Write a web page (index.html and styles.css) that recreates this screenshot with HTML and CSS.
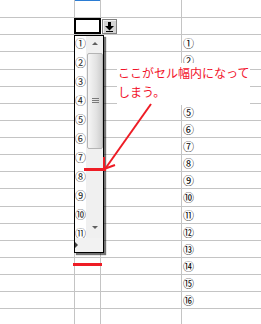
FILE: index.html
```html
<!doctype html>
<html>
<head>
  <meta charset="utf-8">
  <title>入力規則リスト</title>
  <link rel="stylesheet" href="styles.css">
</head>
<body>

  <div class="sheet">
    <div class="row tall"><div class="cell"></div><div class="cell head-mark"></div><div class="cell"></div><div class="cell"></div></div>
    <div class="row"><div class="cell"></div><div class="cell"></div><div class="cell"></div><div class="cell"></div></div>
    <div class="row"><div class="cell"></div><div class="cell"></div><div class="cell"></div><div class="cell">①</div></div>
    <div class="row tall"><div class="cell"></div><div class="cell"></div><div class="cell"></div><div class="cell">②</div></div>
    <div class="row"><div class="cell"></div><div class="cell"></div><div class="cell"></div><div class="cell"></div></div>
    <div class="row"><div class="cell"></div><div class="cell"></div><div class="cell"></div><div class="cell"></div></div>
    <div class="row"><div class="cell"></div><div class="cell"></div><div class="cell"></div><div class="cell">⑤</div></div>
    <div class="row"><div class="cell"></div><div class="cell"></div><div class="cell"></div><div class="cell">⑥</div></div>
    <div class="row"><div class="cell"></div><div class="cell"></div><div class="cell"></div><div class="cell">⑦</div></div>
    <div class="row"><div class="cell"></div><div class="cell"></div><div class="cell"></div><div class="cell">⑧</div></div>
    <div class="row"><div class="cell"></div><div class="cell"></div><div class="cell"></div><div class="cell">⑨</div></div>
    <div class="row tall"><div class="cell"></div><div class="cell"></div><div class="cell"></div><div class="cell">⑩</div></div>
    <div class="row"><div class="cell"></div><div class="cell"></div><div class="cell"></div><div class="cell">⑪</div></div>
    <div class="row"><div class="cell"></div><div class="cell"></div><div class="cell"></div><div class="cell">⑫</div></div>
    <div class="row"><div class="cell"></div><div class="cell"></div><div class="cell"></div><div class="cell">⑬</div></div>
    <div class="row"><div class="cell"></div><div class="cell"></div><div class="cell"></div><div class="cell">⑭</div></div>
    <div class="row"><div class="cell"></div><div class="cell"></div><div class="cell"></div><div class="cell">⑮</div></div>
    <div class="row"><div class="cell"></div><div class="cell"></div><div class="cell"></div><div class="cell">⑯</div></div>
    <div class="row last"><div class="cell"></div><div class="cell"></div><div class="cell"></div><div class="cell"></div></div>
  </div>

  <div class="selection"></div>

  <div class="drop-btn">
    <svg width="13" height="13" viewBox="0 0 13 13">
      <rect x="5" y="2" width="3" height="4" fill="#000"/>
      <polygon points="2,6 11,6 6.5,10.5" fill="#000"/>
      <rect x="3" y="11" width="7" height="1" fill="#000"/>
    </svg>
  </div>

  <div class="list">
    <div class="list-body">
      <ul class="items">
        <li>①</li>
        <li>②</li>
        <li>③</li>
        <li>④</li>
        <li>⑤</li>
        <li>⑥</li>
        <li>⑦</li>
        <li>⑧</li>
        <li>⑨</li>
        <li>⑩</li>
        <li>⑪</li>
      </ul>
      <div class="scrollbar">
        <div class="sb-btn up"></div>
        <div class="sb-track">
          <div class="sb-thumb"><span class="grip"></span></div>
        </div>
        <div class="sb-btn down"></div>
      </div>
    </div>
    <div class="list-foot"><span class="foot-arrow"></span></div>
  </div>

  <div class="note">ここがセル幅内になって<br>しまう。</div>

  <svg class="marks" width="261" height="324" viewBox="0 0 261 324">
    <line x1="151" y1="104" x2="105" y2="169" stroke="#ee1c25" stroke-width="2"/>
    <polyline points="104,157 104,169 115,165" fill="none" stroke="#ee1c25" stroke-width="2"/>
    <rect x="84" y="168" width="22" height="3" fill="#ee1c25"/>
    <rect x="73" y="263" width="29" height="3" fill="#ee1c25"/>
  </svg>

</body>
</html>
```

FILE: styles.css
```css
html, body {
  margin: 0;
  height: 100%;
}

body {
  position: relative;
  width: 261px;
  height: 324px;
  overflow: hidden;
  background: #fff;
  font-family: "Noto Sans CJK JP", sans-serif;
}

.sheet {
  width: 261px;
}

.row {
  display: grid;
  grid-template-columns: 75px 26px 81px 79px;
  height: 17px;
}

.row.tall {
  height: 18px;
}

.row.last {
  height: 16px;
}

.cell {
  border-right: 1px solid #c4c4c4;
  border-bottom: 1px solid #c4c4c4;
  padding-left: 1px;
  font-size: 11px;
  line-height: 16px;
  color: #000;
  overflow: hidden;
  white-space: nowrap;
}

.cell:last-child {
  border-right: none;
}

.head-mark {
  box-shadow: inset 0 1px 0 #2b7cd3;
}

/* active cell */
.selection {
  position: absolute;
  left: 74px;
  top: 18px;
  width: 23px;
  height: 12px;
  border: 2px solid #000;
}

.drop-btn {
  position: absolute;
  left: 102px;
  top: 19px;
  width: 13px;
  height: 13px;
  border: 1px solid #808080;
  background: #d4d4d4;
  box-shadow: inset 1px 1px 0 #f2f2f2;
}

.drop-btn svg {
  display: block;
}

/* dropdown list */
.list {
  position: absolute;
  left: 74px;
  top: 35px;
  width: 28px;
  height: 216px;
  border: 1px solid #000;
  background: #fff;
  box-shadow: 2px 2px 1px rgba(0, 0, 0, 0.55);
}

.list-body {
  display: flex;
  height: 202px;
}

.items {
  width: 11px;
  margin: -2px 0 0;
  padding: 0;
  list-style: none;
  overflow: hidden;
}

.items li {
  height: 19px;
  font-size: 11px;
  line-height: 19px;
  color: #1c1c1c;
  white-space: nowrap;
}

.scrollbar {
  width: 17px;
  display: flex;
  flex-direction: column;
  background: #f0f0f0;
}

.sb-btn {
  position: relative;
  height: 17px;
}

.sb-btn::after {
  content: "";
  position: absolute;
  left: 6px;
  border-left: 3px solid transparent;
  border-right: 3px solid transparent;
}

.sb-btn.up::after {
  top: 6px;
  border-bottom: 3px solid #606060;
}

.sb-btn.down::after {
  top: 5px;
  border-top: 3px solid #606060;
}

.sb-track {
  flex: 1;
}

.sb-thumb {
  position: relative;
  height: 94px;
  margin: 0 0 0 1px;
  width: 14px;
  border: 1px solid #b4b4b4;
  border-radius: 2px;
  background: linear-gradient(to right, #f6f6f6, #e2e2e2 60%, #cdcdcd);
}

.grip {
  position: absolute;
  left: 4px;
  top: 44px;
  width: 7px;
  height: 5px;
  background: repeating-linear-gradient(to bottom, #7a7a7a 0 1px, transparent 1px 2px);
}

.list-foot {
  position: relative;
  height: 14px;
  background: #f2f2f2;
}

.foot-arrow {
  position: absolute;
  left: 0;
  top: 4px;
  border-left: 3px solid #404040;
  border-top: 3px solid transparent;
  border-bottom: 3px solid transparent;
}

/* annotation */
.note {
  position: absolute;
  left: 117px;
  top: 63px;
  width: 132px;
  height: 42px;
  padding-left: 1px;
  background: #fff;
  color: #f2132b;
  font-size: 12px;
  line-height: 19px;
  white-space: nowrap;
}

.marks {
  position: absolute;
  left: 0;
  top: 0;
  pointer-events: none;
}
```
